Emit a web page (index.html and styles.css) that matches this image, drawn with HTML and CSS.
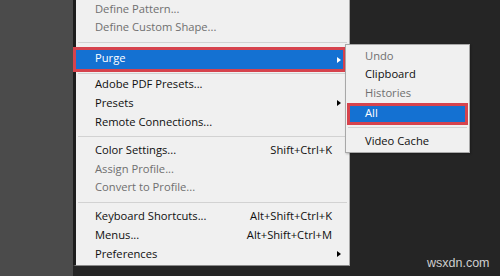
FILE: index.html
```html
<!DOCTYPE html>
<html lang="en">
<head>
    <meta charset="UTF-8">
    <meta name="viewport" content="width=device-width, initial-scale=1.0">
    <title>Edit Menu - Purge</title>
    <link rel="stylesheet" href="styles.css">
</head>
<body>
    <div class="screen">
        <div class="side-panel"></div>

        <!-- Main Edit menu (scrolled, top part cut off) -->
        <div class="menu">
            <div class="menu-item menu-item--disabled menu-item--tight"><span class="menu-label">Define Pattern...</span><span class="menu-key"></span></div>
            <div class="menu-item menu-item--disabled menu-item--tight"><span class="menu-label">Define Custom Shape...</span><span class="menu-key"></span></div>
            <div class="menu-separator menu-separator--top"></div>
            <div class="menu-item menu-item--marked"><span class="menu-label">Purge</span><span class="menu-key"><span class="menu-arrow menu-arrow--light"></span></span></div>
            <div class="menu-separator menu-separator--thin"></div>
            <div class="menu-item"><span class="menu-label">Adobe PDF Presets...</span><span class="menu-key"></span></div>
            <div class="menu-item"><span class="menu-label">Presets</span><span class="menu-key"><span class="menu-arrow"></span></span></div>
            <div class="menu-item"><span class="menu-label">Remote Connections...</span><span class="menu-key"></span></div>
            <div class="menu-separator"></div>
            <div class="menu-item menu-item--short"><span class="menu-label">Color Settings...</span><span class="menu-shortcut">Shift+Ctrl+K</span><span class="menu-key"></span></div>
            <div class="menu-item menu-item--short menu-item--disabled"><span class="menu-label">Assign Profile...</span><span class="menu-key"></span></div>
            <div class="menu-item menu-item--short menu-item--disabled"><span class="menu-label">Convert to Profile...</span><span class="menu-key"></span></div>
            <div class="menu-separator menu-separator--lower"></div>
            <div class="menu-item"><span class="menu-label">Keyboard Shortcuts...</span><span class="menu-shortcut">Alt+Shift+Ctrl+K</span><span class="menu-key"></span></div>
            <div class="menu-item"><span class="menu-label">Menus...</span><span class="menu-shortcut">Alt+Shift+Ctrl+M</span><span class="menu-key"></span></div>
            <div class="menu-item"><span class="menu-label">Preferences</span><span class="menu-key"><span class="menu-arrow"></span></span></div>
        </div>

        <!-- Purge submenu, opened over the main menu -->
        <div class="submenu">
            <div class="submenu-item menu-item--disabled">Undo</div>
            <div class="submenu-item">Clipboard</div>
            <div class="submenu-item menu-item--disabled">Histories</div>
            <div class="submenu-item submenu-item--marked">All</div>
            <div class="submenu-separator"></div>
            <div class="submenu-item submenu-item--last">Video Cache</div>
        </div>

        <div class="watermark">wsxdn.com</div>
    </div>
</body>
</html>
```

FILE: styles.css
```css
:root {
    --desk-dark: #252525;
    --desk-gray: #4b4b4b;
    --menu-bg: #f0f0f0;
    --menu-border: #a8a8a8;
    --text-primary: #0f0f0f;
    --text-disabled: #6f6f6f;
    --separator: #d2d2d2;
    --highlight: #1471d2;
    --mark-red: #d6434d;

    --font-menu: "Open Sans", "Noto Sans", sans-serif;
}

*, *::before, *::after {
    box-sizing: border-box;
    margin: 0;
    padding: 0;
}

body {
    background-color: var(--desk-dark);
    font-family: var(--font-menu);
    font-size: 11.2px;
    color: var(--text-primary);
}

.screen {
    position: relative;
    display: flex;
    width: 500px;
    height: 276px;
    overflow: hidden;
}

.side-panel {
    width: 73px;
    background-color: var(--desk-gray);
}

.menu {
    align-self: flex-start;
    width: 277px;
    height: 266px;
    background-color: var(--menu-bg);
    border-left: 3px solid #1d1d1d;
    border-right: 1px solid var(--menu-border);
    border-bottom: 1px solid #8a8a8a;
    display: flex;
    flex-direction: column;
}

.menu-item {
    display: flex;
    align-items: center;
    height: 19px;
    line-height: 19px;
    padding-left: 19px;
    white-space: nowrap;
}

.menu-item--tight {
    height: 18px;
    line-height: 18px;
}

.menu-item--short {
    height: 18.5px;
    line-height: 18.5px;
}

.menu-item--disabled {
    color: var(--text-disabled);
}

.menu-label {
    flex: 1;
}

.menu-shortcut {
    text-align: right;
}

.menu-key {
    width: 17px;
    display: flex;
    align-items: center;
}

.menu-arrow {
    margin-left: 5px;
    width: 0;
    height: 0;
    border-left: 4px solid #000;
    border-top: 3.5px solid transparent;
    border-bottom: 3.5px solid transparent;
}

.menu-arrow--light {
    border-left-color: #fff;
}

.menu-item--marked {
    height: 25px;
    line-height: 15px;
    padding-bottom: 4px;
    margin: 0 3px 0 -3px;
    background-color: var(--highlight);
    border: 3px solid var(--mark-red);
    color: #fff;
}

.menu-item--marked .menu-key {
    width: 11px;
    margin-top: 4px;
}

.menu-separator {
    height: 10px;
    padding-top: 5px;
    margin: 0 2px;
}

.menu-separator::after {
    content: "";
    display: block;
    border-top: 1px solid var(--separator);
}

.menu-separator--top {
    height: 11px;
    padding-top: 6px;
}

.menu-separator--thin {
    height: 2px;
    padding-top: 1px;
}

.menu-separator--lower {
    height: 9.5px;
    padding-top: 5.5px;
}

.submenu {
    position: absolute;
    left: 345px;
    top: 44px;
    width: 125px;
    padding: 1.5px 0 2px;
    background-color: var(--menu-bg);
    border: 1px solid var(--menu-border);
    box-shadow: 1px 1px 2px rgba(0, 0, 0, 0.25);
}

.submenu-item {
    height: 18.5px;
    line-height: 18.5px;
    padding-left: 19px;
    white-space: nowrap;
}

.submenu-item--marked {
    height: 22px;
    line-height: 14px;
    padding-left: 15px;
    padding-bottom: 2px;
    margin: 1px 1px 0;
    background-color: var(--highlight);
    border: 3px solid var(--mark-red);
    color: #fff;
}

.submenu-item--last {
    height: 19px;
    line-height: 19px;
}

.submenu-separator {
    height: 6px;
    padding-top: 2px;
    margin: 0 2px;
}

.submenu-separator::after {
    content: "";
    display: block;
    border-top: 1px solid var(--separator);
}

.watermark {
    position: absolute;
    left: 427px;
    top: 256px;
    font-family: "Liberation Sans", Arial, sans-serif;
    font-size: 12.5px;
    color: #cfcfcf;
}
```
